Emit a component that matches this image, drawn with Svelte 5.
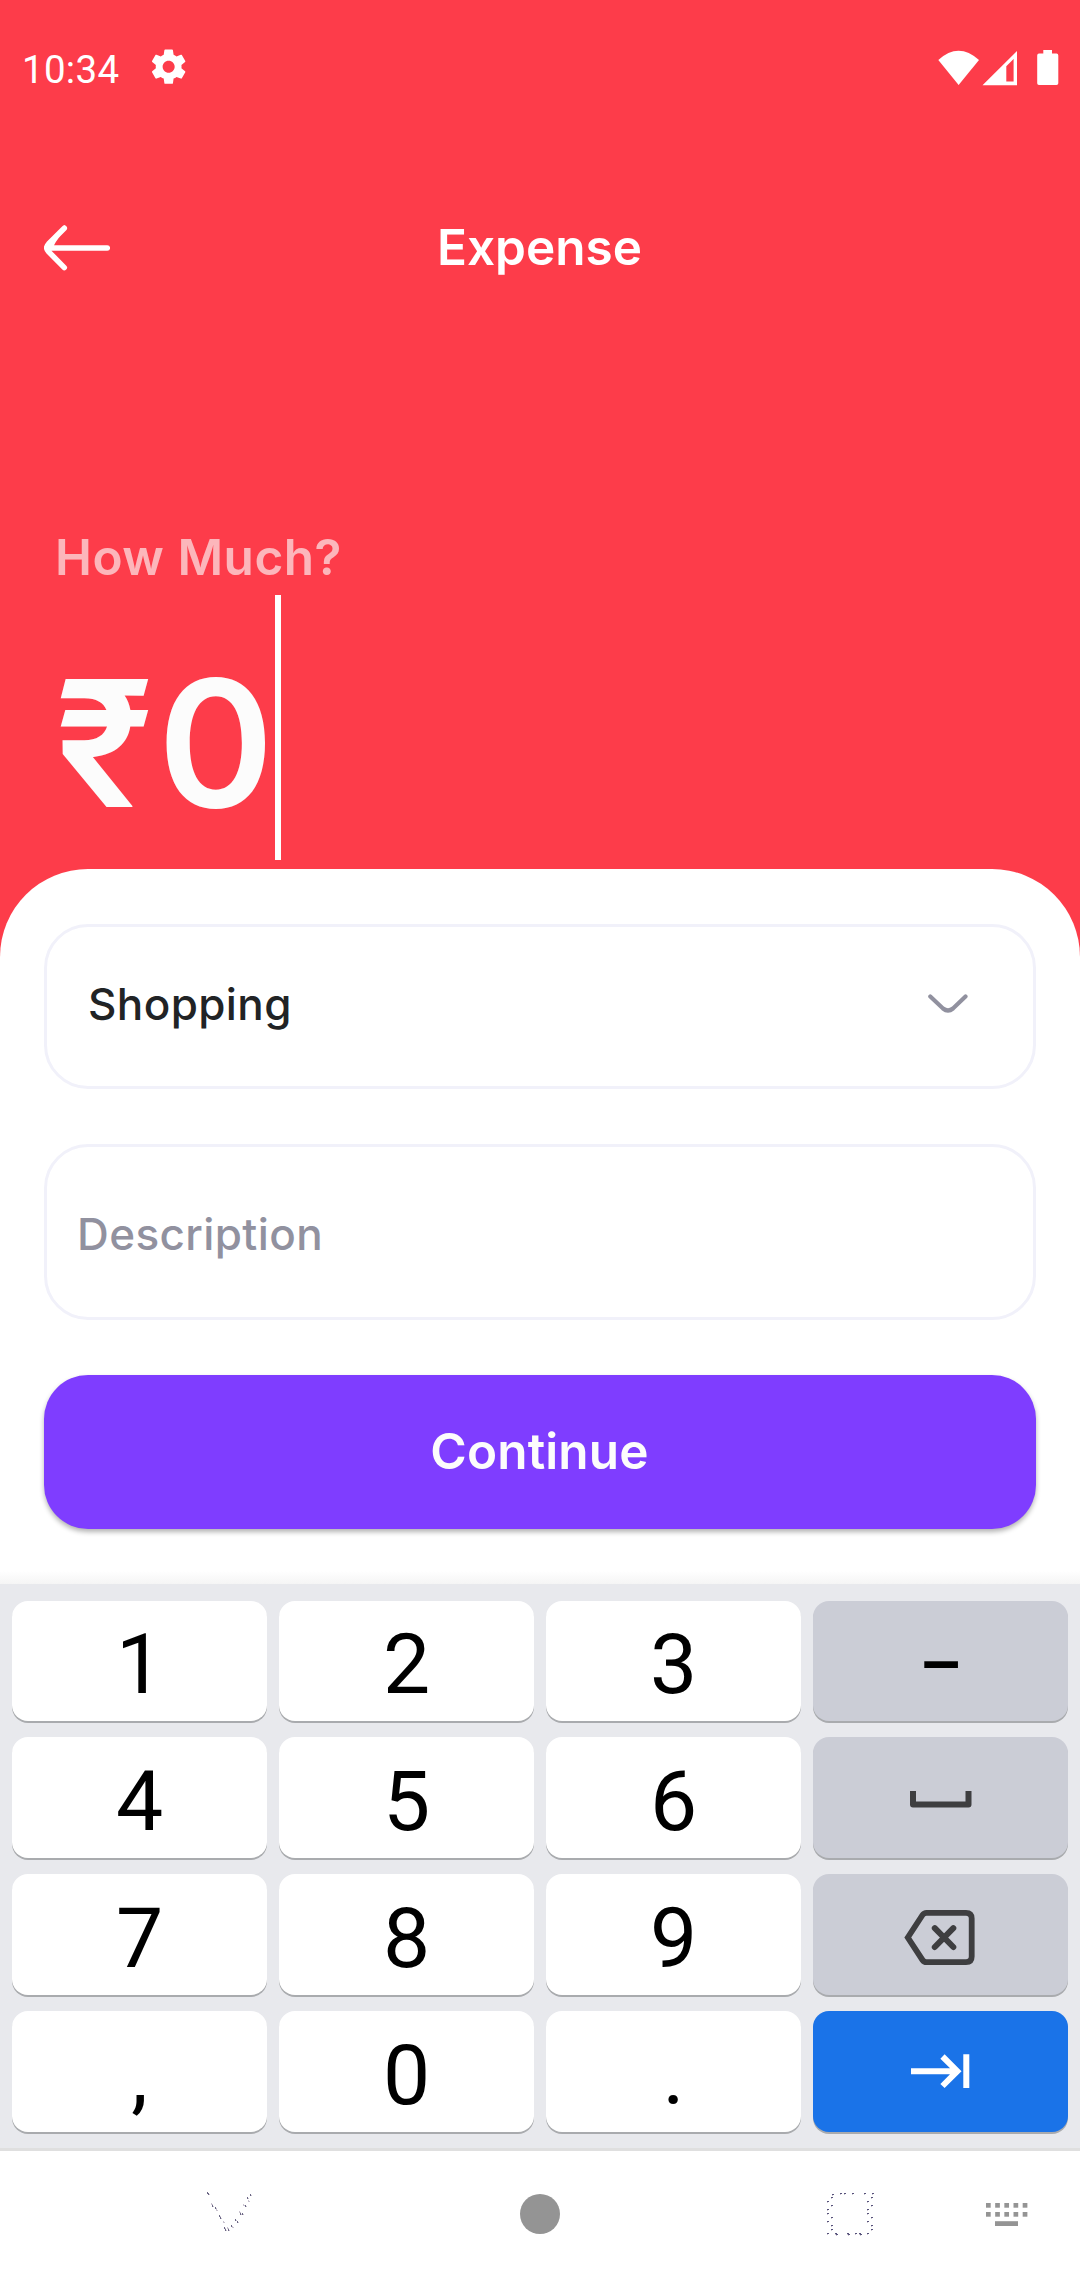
<script>
  const rows = [
    ['1', '2', '3', 'dash'],
    ['4', '5', '6', 'space'],
    ['7', '8', '9', 'back'],
    [',', '0', '.', 'next']
  ];
  const special = ['dash', 'space', 'back', 'next'];

  // Speckled outlines of the faint navigation buttons: [x, y]
  const triDots = [
    [1, 0], [2, 1], [5, 11], [6, 13], [9, 15], [10, 17], [13, 23], [14, 25], [17, 29],
    [18, 35], [19, 37], [21, 35], [22, 37], [25, 33], [26, 34], [29, 27], [31, 29],
    [33, 19], [34, 21], [36, 21], [37, 12], [39, 13], [41, 5], [42, 8], [44, 2]
  ];
  const sqDots = [
    [6, 2], [5, 5], [1, 9], [5, 13], [1, 17], [1, 21], [5, 25], [1, 29], [5, 33], [5, 37],
    [14, 1], [18, 1], [26, 1], [38, 1], [46, 1], [45, 5], [41, 9], [45, 13], [41, 17],
    [41, 21], [45, 25], [41, 29], [45, 33], [45, 37], [41, 41], [1, 41], [9, 41], [10, 42],
    [21, 41], [22, 42], [29, 41], [33, 41], [34, 42]
  ];
</script>

<div class="screen">
  <div class="status">
    <span class="time">10:34</span>
    <svg class="gear" viewBox="0 0 24 24"><path d="M19.43 12.98c.04-.32.07-.64.07-.98s-.03-.66-.07-.98l2.11-1.65c.19-.15.24-.42.12-.64l-2-3.46c-.12-.22-.39-.3-.61-.22l-2.49 1c-.52-.4-1.08-.73-1.69-.98l-.38-2.65C14.46 2.18 14.25 2 14 2h-4c-.25 0-.46.18-.49.42l-.38 2.65c-.61.25-1.17.59-1.69.98l-2.49-1c-.23-.09-.49 0-.61.22l-2 3.46c-.13.22-.07.49.12.64l2.11 1.65c-.04.32-.07.65-.07.98s.03.66.07.98l-2.11 1.65c-.19.15-.24.42-.12.64l2 3.46c.12.22.39.3.61.22l2.49-1c.52.4 1.08.73 1.69.98l.38 2.65c.03.24.24.42.49.42h4c.25 0 .46-.18.49-.42l.38-2.65c.61-.25 1.17-.59 1.69-.98l2.49 1c.23.09.49 0 .61-.22l2-3.46c.12-.22.07-.49-.12-.64l-2.11-1.65zM12 15.5c-1.93 0-3.5-1.57-3.5-3.5s1.570-3.500 3.500-3.500 3.500 1.570 3.500 3.500-1.570 3.500-3.500 3.500z" /></svg>
    <svg class="signals" viewBox="0 0 122 36">
      <path d="M0.300 10Q20.500 -8.500 41 10L20.600 35z" />
      <path fill-rule="evenodd" d="M44.500 35.200L79 1V35.200zM68.300 16.300V31.500H75.600V9z" />
      <path d="M105.300 0H114V3.600H118.500Q120.300 3.600 120.300 5.400V33.200Q120.300 35 118.500 35H101Q99.200 35 99.200 33.200V5.400Q99.200 3.600 101 3.600H105.300z" />
    </svg>
  </div>

  <header>
    <svg class="arrow" viewBox="0 0 66 46"><path d="M63.300 23H6M20.300 3.200L4.500 19Q1 22.800 4.500 26.600L20.300 42.600M20.300 3.200Q11 11.500 7 20" /></svg>
    <h1>Expense</h1>
  </header>

  <div class="question">How Much?</div>
  <div class="amount"><span>₹0</span><i class="caret"></i></div>

  <main>
    <div class="field select">
      <span>Shopping</span>
      <svg viewBox="0 0 40 20"><path d="M2.300 2.500L15 14.500Q20 18.500 25 14.500L37.500 2.500" /></svg>
    </div>
    <div class="field desc">Description</div>
    <button class="continue">Continue</button>
  </main>

  <div class="keyboard">
    {#each rows as row, r}
      {#each row as k}
        <div class="key" class:low={r > 0} class:special={special.includes(k)} class:blue={k === 'next'}>
          {#if k === 'dash'}
            <span class="dash">–</span>
          {:else if k === 'space'}
            <svg viewBox="0 0 255 121"><path d="M100 54V67.500H155.500V54" stroke-width="6" stroke-linejoin="round" /></svg>
          {:else if k === 'back'}
            <svg viewBox="0 0 255 121"><path d="M94.800 63.500L109.500 41Q111 38.800 113.500 38.800H153Q158.700 38.800 158.700 44.500V82.500Q158.700 88.200 153 88.200H113.500Q111 88.200 109.500 86z" stroke-width="5.800" /><path d="M121.800 54.200L140.300 73M140.300 54.200L121.800 73" stroke-width="6" stroke-linecap="round" /></svg>
          {:else if k === 'next'}
            <svg viewBox="0 0 255 121"><path d="M98 60.200H144M129.500 45.500L144.300 60.200L129.500 75M153.300 43.300V77" stroke-width="6" /></svg>
          {:else}
            {k}
          {/if}
        </div>
      {/each}
    {/each}
  </div>

  <nav>
    <svg class="tri" viewBox="0 0 46 40">
      {#each triDots as [x, y], i}
        <rect {x} {y} width="1" height="2" class:pale={i % 3 === 2} />
        <rect x={x + 1} y={y + 1} width="1" height="1" class="pale" />
      {/each}
    </svg>
    <i class="home"></i>
    <svg class="sq" viewBox="0 0 48 44">
      {#each sqDots as [x, y]}
        <rect {x} {y} width="2" height="1" />
        <rect x={x} y={y + 1} width="1" height="1" class="pale" />
      {/each}
    </svg>
    <svg class="kb" viewBox="0 0 42 24">
      {#each [0, 1, 2, 3, 4] as c}
        <rect x={c * 9.17} y="0" width="4.700" height="4.700" />
        <rect x={c * 9.17} y="9" width="4.700" height="4.700" />
      {/each}
      <rect x="9" y="18.200" width="23" height="4.800" />
    </svg>
  </nav>
</div>

<style>
  :global(body) { margin: 0; background: #fff; }
  .screen {
    width: 1080px; height: 2280px; overflow: hidden;
    display: flex; flex-direction: column;
    background: #fd3c4a; font-family: Inter, sans-serif;
  }
  .status {
    height: 137px; box-sizing: border-box; padding: 46px 20.500px 0 22px;
    display: flex; align-items: flex-start; flex: none;
  }
  .time { font: 38.5px/45px Roboto, sans-serif; letter-spacing: 0.3px; color: #fff; width: 125.5px; padding-top: 1px; }
  .status svg { fill: #fff; }
  .gear { width: 41.300px; height: 41.300px; }
  .signals { width: 122px; height: 36px; margin-left: auto; margin-top: 3.500px; }
  header {
    height: 222px; flex: none; padding: 0 44px;
    display: grid; grid-template-columns: 66px 1fr 66px; align-items: center;
  }
  .arrow { width: 66px; height: 46px; fill: none; stroke: #fff; stroke-width: 5.500; stroke-linecap: round; }
  h1 {
    margin: 0; padding: 0 1px 2px 0; text-align: center; color: #fff;
    font-weight: 600; font-size: 49.5px; line-height: 60px;
  }
  .question {
    margin-top: 168px; padding-left: 55px; height: 68px; flex: none; letter-spacing: 0.52px;
    font-weight: 600; font-size: 49.5px; line-height: 60px; color: rgba(252, 252, 252, 0.64);
  }
  .amount {
    height: 274px; flex: none; padding-left: 55px; display: flex;
    font-weight: 600; font-size: 176px; color: #fcfcfc;
  }
  .amount span { line-height: 236px; padding-top: 30px; height: 236px; width: 220px; white-space: nowrap; letter-spacing: 3.8px; }
  .caret { width: 6px; height: 265px; background: #fff; }
  main {
    height: 715px; flex: none; box-sizing: border-box; padding: 55px 44px 0;
    background: linear-gradient(#fff 702px, #f5f5f5 715px);
    border-radius: 88px 88px 0 0; display: flex; flex-direction: column; gap: 55px;
  }
  .field {
    box-sizing: border-box; border: 3px solid #f1f1fa; border-radius: 44px;
    display: flex; align-items: center; font-weight: 500; font-size: 44px; line-height: 54px;
    letter-spacing: 0.4px;
  }
  .select { height: 165px; padding: 0 65.500px 6px 41px; justify-content: space-between; color: #212325; }
  .select svg { width: 40px; height: 20px; fill: none; stroke: #91919f; stroke-width: 4.200; stroke-linecap: round; margin-top: 1.500px; }
  .desc { height: 176px; padding: 3px 30px 0; color: #91919f; }
  .continue {
    height: 154px; border: 0; border-radius: 44px; padding: 0 1px 2px 0; background: #7f3dff; color: #fcfcfc;
    font: 600 49.5px/60px Inter, sans-serif; letter-spacing: 0.15px; box-shadow: 0 3px 5px rgba(0, 0, 0, 0.3);
  }
  .keyboard {
    height: 567px; flex: none; box-sizing: border-box; padding: 17px 12px 0;
    background: #e8e9ed; border-bottom: 3px solid #dfdfdf;
    display: grid; grid-template-columns: repeat(4, 255px); grid-template-rows: 120px 121px 121px 121px;
    column-gap: 12px; row-gap: 16px; align-content: start;
  }
  .key {
    box-sizing: border-box; border-radius: 16px; background: #fff; box-shadow: 0 2px 0 #a9abae;
    display: flex; align-items: center; justify-content: center; padding-top: 7px;
    font-family: Roboto, sans-serif; font-size: 84px; line-height: 100px; color: #000;
  }
  .low { padding-top: 9px; }
  .special { background: #cbcdd6; padding: 0; }
  .blue { background: #1a73e8; }
  .key svg { width: 255px; height: 121px; fill: none; stroke: #3e3e40; }
  .blue svg { stroke: #fff; }
  .dash { font-size: 67px; font-weight: 600; padding-top: 7px; }
  nav { flex: 1; display: flex; align-items: flex-start; background: #fff; }
  nav svg { fill: #45406f; shape-rendering: crispEdges; }
  nav .pale { fill: #c9c3cf; }
  nav .tri { width: 46px; height: 40px; margin: 41px 0 0 206px; fill: #6b6785; }
  .home { width: 40px; height: 40px; border-radius: 50%; background: #949494; margin: 43px 0 0 268px; }
  nav .sq { width: 48px; height: 44px; margin: 41px 0 0 266px; fill: #57537c; }
  nav .kb { width: 42px; height: 24px; margin: 52px 0 0 112px; fill: #949494; shape-rendering: auto; }
</style>
